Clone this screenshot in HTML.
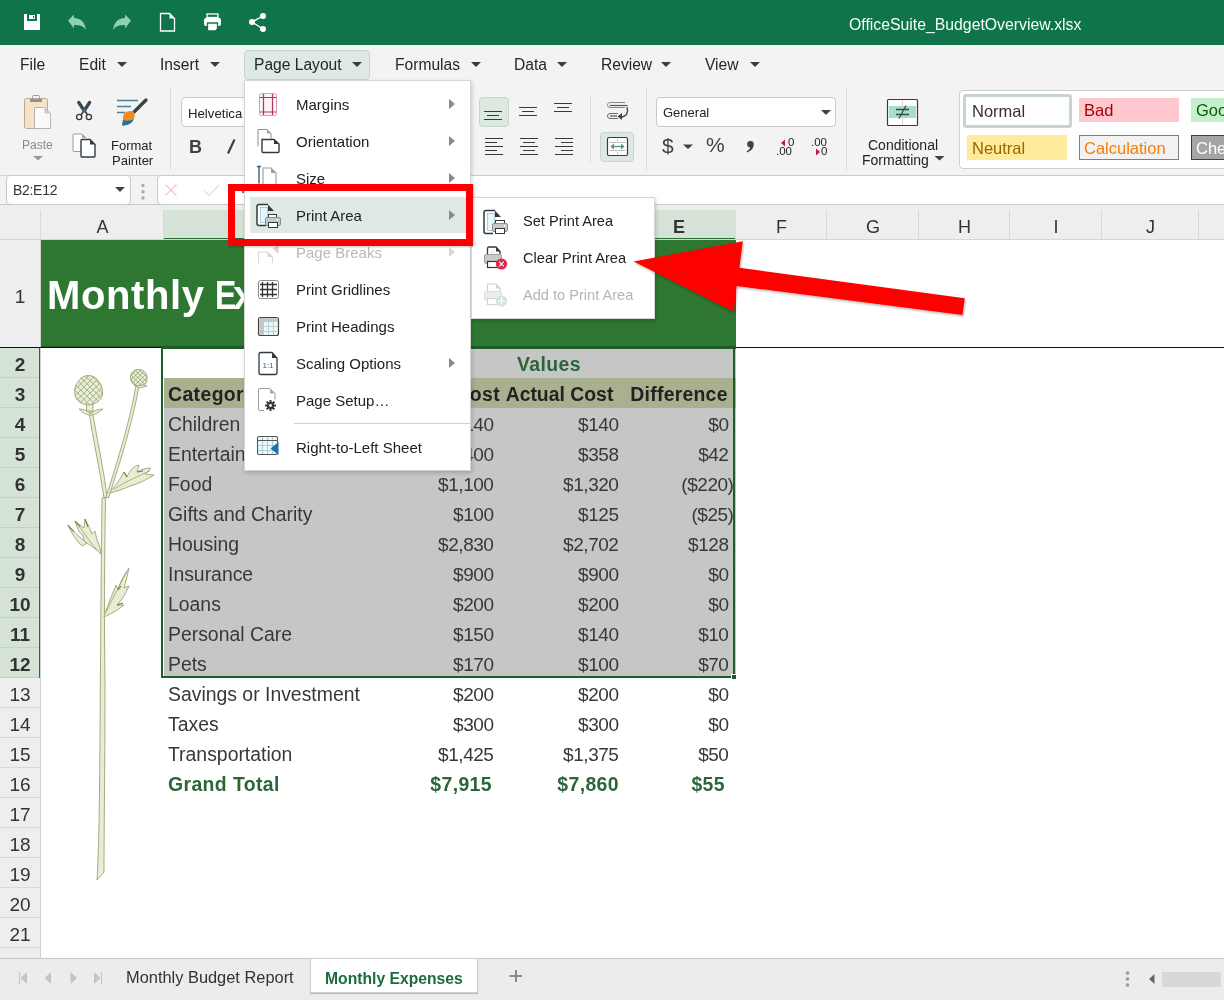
<!DOCTYPE html>
<html><head><meta charset="utf-8"><style>
*{margin:0;padding:0;box-sizing:border-box}
html,body{width:1224px;height:1000px;overflow:hidden;background:#fff;font-family:"Liberation Sans",sans-serif;color:#222}
.a{position:absolute}
.t{position:absolute;white-space:nowrap;line-height:1}
svg{position:absolute;overflow:visible}
.mi{font-size:15.6px;color:#262626}
.dd{position:absolute;width:0;height:0;border-left:5px solid transparent;border-right:5px solid transparent;border-top:5px solid #3c3c3c}
.ch{font-size:18px;color:#333;text-align:center}
.rh{font-size:19px;color:#333;text-align:center}
.c{font-size:19.4px;color:#383838}
.r{text-align:right}
.bd{font-weight:bold}
.c.bd{letter-spacing:0.4px}
.mt{font-size:15px;color:#222}
</style></head><body>
<div id="root" style="position:absolute;left:0;top:0;width:1224px;height:1000px;overflow:hidden;will-change:transform">
<div class="a" style="left:0px;top:0px;width:1224px;height:45px;background:#0f7449"></div>
<div class="a" style="left:0px;top:45px;width:1224px;height:1px;background:#eef8f3"></div>
<div class="t " style="left:849px;top:17px;font-size:15.8px;color:#f4fff9">OfficeSuite_BudgetOverview.xlsx</div>
<div class="a" style="left:0px;top:46px;width:1224px;height:39px;background:#f3f3f3"></div>
<div class="a" style="left:244px;top:50px;width:126px;height:30px;background:#dde9e2;border:1px solid #c6d5cb;border-radius:4px"></div>
<div class="t mi" style="left:20px;top:57px;">File</div>
<div class="t mi" style="left:79px;top:57px;">Edit</div>
<div class="dd" style="left:117px;top:62px"></div>
<div class="t mi" style="left:160px;top:57px;">Insert</div>
<div class="dd" style="left:210px;top:62px"></div>
<div class="t mi" style="left:254px;top:57px;">Page Layout</div>
<div class="dd" style="left:352px;top:62px"></div>
<div class="t mi" style="left:395px;top:57px;">Formulas</div>
<div class="dd" style="left:471px;top:62px"></div>
<div class="t mi" style="left:514px;top:57px;">Data</div>
<div class="dd" style="left:557px;top:62px"></div>
<div class="t mi" style="left:601px;top:57px;">Review</div>
<div class="dd" style="left:661px;top:62px"></div>
<div class="t mi" style="left:705px;top:57px;">View</div>
<div class="dd" style="left:750px;top:62px"></div>
<div class="a" style="left:0px;top:85px;width:1224px;height:90px;background:#f3f3f3"></div>
<div class="a" style="left:0px;top:175px;width:1224px;height:1px;background:#d6d6d6"></div>
<div class="a" style="left:479px;top:97px;width:30px;height:30px;background:#dce9e1;border:1px solid #c8d6cd;border-radius:4px"></div>
<div class="a" style="left:600px;top:132px;width:34px;height:30px;background:#dce9e1;border:1px solid #c8d6cd;border-radius:4px"></div>

<svg style="left:0;top:0" width="1224" height="180">
 <!-- paste -->
 <rect x="24.5" y="98.5" width="23" height="30" rx="2" fill="#f8e2c6" stroke="#b9aa98" stroke-width="1"/>
 <rect x="30" y="99" width="12" height="3" fill="#8f8f8f"/>
 <rect x="32.5" y="95.5" width="7" height="4" rx="1" fill="none" stroke="#9a9a9a" stroke-width="1"/>
 <path d="M34.5 128.5v-21h10l6 6v15z" fill="#fafafa" stroke="#b5b5b5" stroke-width="1"/>
 <path d="M44.5 107.5l6 6h-6z" fill="#c8c8c8"/>
 <path d="M33 156h10l-5 4.5z" fill="#9a9a9a"/>
 <!-- scissors -->
 <path d="M78.8 102.5L83.6 109.8M89.6 102.5L84.8 109.8" stroke="#37474f" stroke-width="3.3" stroke-linecap="round"/>
 <rect x="82.3" y="109" width="4" height="3.6" fill="#4f6670"/>
 <path d="M83 112l-1.8 2.6M85.6 112l1.8 2.6" stroke="#2f3a40" stroke-width="1.6"/>
 <circle cx="79.2" cy="117" r="2.6" fill="none" stroke="#2f3a40" stroke-width="1.3"/>
 <circle cx="88.9" cy="117" r="2.6" fill="none" stroke="#2f3a40" stroke-width="1.3"/>
 <!-- copy -->
 <path d="M81 151.5h-7a1 1 0 0 1-1-1v-15.5a1 1 0 0 1 1-1h8l4 4" fill="#fff" stroke="#9a9a9a" stroke-width="1"/>
 <path d="M82 134l4 4h-4z" fill="#a5a5a5"/>
 <path d="M90 139.5h-8a1 1 0 0 0-1 1v15.5a1 1 0 0 0 1 1h12a1 1 0 0 0 1-1v-11.5z" fill="#fff" stroke="#2f3a40" stroke-width="1.4"/>
 <path d="M90 139.5l5 5h-5z" fill="#2f3a40"/>
 <!-- format painter -->
 <path d="M117 100.5h21M117 106.5h14M117 112.5h8" stroke="#4c8198" stroke-width="1.3"/>
 <path d="M146 100l-12 12" stroke="#3a4349" stroke-width="3.4" stroke-linecap="round"/>
 <path d="M133.5 111.5c-5-2-11 1-10.5 7l-1 7c4 0 9-1 11-5 2-3 2.5-6 0.5-9z" fill="#f28a22"/>
 <path d="M122 125.5c4 0 9-1 11-5l0.8-1.2c-3 1.5-8 2-10.6 0.7z" fill="#1a72b6"/>
 <!-- font group -->
 <path d="M234.5 139.5l-6.5 14" stroke="#3a4349" stroke-width="2.2"/>
 <!-- alignment -->
 <path d="M484 111.5h18M487 115.5h12M484 119.5h18" stroke="#3a3a3a" stroke-width="1.1"/>
 <path d="M519 107.5h18M522 111.5h12M519 115.5h18" stroke="#3a3a3a" stroke-width="1.1"/>
 <path d="M554 103.5h18M557 107.5h12M554 111.5h18" stroke="#3a3a3a" stroke-width="1.1"/>
 <path d="M485 138.5h18M485 142.5h12M485 146.5h18M485 150.5h12M485 154.5h18" stroke="#3a3a3a" stroke-width="1.1"/>
 <path d="M520 138.5h18M523 142.5h12M520 146.5h18M523 150.5h12M520 154.5h18" stroke="#3a3a3a" stroke-width="1.1"/>
 <path d="M555 138.5h18M561 142.5h12M555 146.5h18M561 150.5h12M555 154.5h18" stroke="#3a3a3a" stroke-width="1.1"/>
 <!-- wrap -->
 <path d="M625 102.5h-15a2.5 2.5 0 0 0 0 5h15" fill="none" stroke="#8a8a8a" stroke-width="1"/>
 <path d="M610 105.5h17.5" stroke="#2f5f75" stroke-width="1.2"/>
 <path d="M618 113.5h-8a2.5 2.5 0 0 0 0 5h8" fill="none" stroke="#6a6a6a" stroke-width="1"/>
 <path d="M610 116h7" stroke="#3a4349" stroke-width="1.1"/>
 <path d="M627 107c1.5 5 0 10-6.5 10" fill="none" stroke="#3a4349" stroke-width="1.3"/>
 <path d="M617.5 116.5l4.5-3.5v7z" fill="#3a4349"/>
 <!-- merge -->
 <rect x="607.5" y="137.5" width="20" height="18" rx="1.5" fill="#fff" stroke="#3a3a3a" stroke-width="1.2"/>
 <path d="M609.5 142.5h16M609.5 150.5h16M617.5 139v2.5M617.5 152v2.5" stroke="#b0b0b0" stroke-width="0.8"/>
 <path d="M611 146.5h13" stroke="#4a9a78" stroke-width="1.3"/>
 <path d="M610.5 146.5l3.5-3v6zM624.5 146.5l-3.5-3v6z" fill="#4a9a78"/>
 <!-- number -->
 <path d="M822 110h9l-4.5 4.5z" fill="#3a4349"/>
 <path d="M683 144.5h10l-5 4.5z" fill="#3a4349"/>
 <path d="M785 139.5v7l-4-3.5z" fill="#c4183c"/>
 <path d="M816 148.5v7l4-3.5z" fill="#c4183c"/>
 <!-- conditional formatting -->
 <rect x="887.5" y="99.5" width="30" height="26" rx="1" fill="#fff" stroke="#3a3a3a" stroke-width="1.2"/>
 <rect x="889" y="106" width="27" height="12" fill="#a8dccf"/>
 <path d="M902.5 100v25" stroke="#d8c8cc" stroke-width="0.8"/>
 <path d="M896 109.5h13M896 114.5h13M906 105.5l-7 13" stroke="#2f4f4a" stroke-width="1.3"/>
 <path d="M934.5 156h10l-5 4.5z" fill="#3a4349"/>
</svg>

<div class="a" style="left:170px;top:88px;width:1px;height:82px;background:#dcdcdc"></div>
<div class="a" style="left:590px;top:96px;width:1px;height:66px;background:#dcdcdc"></div>
<div class="a" style="left:646px;top:88px;width:1px;height:82px;background:#dcdcdc"></div>
<div class="a" style="left:846px;top:88px;width:1px;height:82px;background:#dcdcdc"></div>
<div class="t " style="left:22px;top:139px;font-size:12px;color:#8a8a8a">Paste</div>
<div class="t " style="left:111px;top:139px;font-size:13px;color:#222">Format</div>
<div class="t " style="left:112px;top:154px;font-size:13px;color:#222">Painter</div>
<div class="a" style="left:181px;top:97px;width:70px;height:30px;background:#fff;border:1px solid #c9c9c9;border-radius:4px"></div>
<div class="t " style="left:188px;top:107px;font-size:13.2px;color:#222">Helvetica</div>
<div class="a" style="left:656px;top:97px;width:180px;height:30px;background:#fff;border:1px solid #c9c9c9;border-radius:4px"></div>
<div class="t " style="left:663px;top:106px;font-size:13px;color:#222">General</div>
<div class="dd" style="left:821px;top:110px;border-top-color:#3a4349"></div>
<div class="t bd" style="left:189px;top:138px;font-size:18px;color:#3a4349">B</div>
<div class="t " style="left:662px;top:135px;font-size:21px;color:#3a4349">$</div>
<div class="t " style="left:706px;top:134px;font-size:21px;color:#3a4349">%</div>
<svg style="left:0;top:0" width="1224" height="180"><path d="M750.5 141a3.2 3.2 0 0 1 3.2 3.4c0 3.5-2.5 6.5-6.5 8l-0.6-1.2c2-1 3.3-2.3 3.6-3.8a3.2 3.2 0 0 1 0.3-6.4z" fill="#3a4349"/></svg>
<div class="t " style="left:788px;top:137px;font-size:11.5px;color:#222">0</div>
<div class="t " style="left:776px;top:146px;font-size:11.5px;color:#222">.00</div>
<div class="t " style="left:811px;top:137px;font-size:11.5px;color:#222">.00</div>
<div class="t " style="left:821px;top:146px;font-size:11.5px;color:#222">0</div>
<div class="t " style="left:868px;top:138px;font-size:14px;color:#222">Conditional</div>
<div class="t " style="left:862px;top:153px;font-size:14px;color:#222">Formatting</div>
<div class="a" style="left:959px;top:90px;width:280px;height:79px;background:#fff;border:1px solid #cfcfcf;border-radius:4px"></div>
<div class="a" style="left:963px;top:94px;width:109px;height:34px;background:#fff;border:3px solid #c6d6ce;border-radius:3px"></div>
<div class="t " style="left:972px;top:103px;font-size:16.5px;color:#333">Normal</div>
<div class="a" style="left:967px;top:135px;width:100px;height:25px;background:#ffeb9c"></div>
<div class="t " style="left:972px;top:140px;font-size:16.5px;color:#9c6500">Neutral</div>
<div class="a" style="left:1079px;top:98px;width:100px;height:24px;background:#ffc7ce"></div>
<div class="t " style="left:1084px;top:102px;font-size:16.5px;color:#9c0006">Bad</div>
<div class="a" style="left:1079px;top:135px;width:100px;height:25px;background:#f2f2f2;border:1px solid #7f7f7f"></div>
<div class="t " style="left:1084px;top:140px;font-size:16.5px;color:#fa7d00">Calculation</div>
<div class="a" style="left:1191px;top:98px;width:60px;height:24px;background:#c6efce"></div>
<div class="t " style="left:1196px;top:102px;font-size:16.5px;color:#006100">Good</div>
<div class="a" style="left:1191px;top:135px;width:60px;height:25px;background:#a5a5a5;border:1px solid #3f3f3f"></div>
<div class="t " style="left:1196px;top:140px;font-size:16.5px;color:#fff">Check Cell</div>

<svg style="left:0;top:0" width="300" height="44">
 <path d="M24 14h16v16h-16z" fill="#fff"/>
 <rect x="27" y="14" width="10" height="7" fill="#0f7449"/>
 <rect x="29" y="15" width="6" height="4" fill="#fff"/>
 <rect x="33" y="16" width="1.2" height="2" fill="#0f7449"/>
 <path d="M68 20.5l6-6v3.5c6 0 11 3.5 12 12-2.5-4-6-5-12-5v3.5z" fill="#8fd0ae"/>
 <path d="M131 20.5l-6-6v3.5c-6 0-11 3.5-12 12 2.5-4 6-5 12-5v3.5z" fill="#8fd0ae"/>
 <path d="M160.5 13.5h9l5 5v12.5h-14z" fill="none" stroke="#fff" stroke-width="1.3"/>
 <path d="M169.5 13.5l5 5h-5z" fill="#fff"/>
 <rect x="207" y="14" width="11" height="3.5" fill="none" stroke="#fff" stroke-width="1.3"/>
 <rect x="204" y="18" width="17" height="8" rx="2" fill="#fff"/>
 <path d="M207.5 23h10v6l-2 2h-8z" fill="#fff" stroke="#0f7449" stroke-width="1.3"/>
 <circle cx="263" cy="16" r="3" fill="#fff"/><circle cx="252" cy="22" r="3" fill="#fff"/><circle cx="263" cy="29" r="3" fill="#fff"/>
 <path d="M263 16l-11 6 11 7" fill="none" stroke="#fff" stroke-width="1.4"/>
</svg>

<div class="a" style="left:0px;top:176px;width:1224px;height:28px;background:#f3f3f3"></div>
<div class="a" style="left:6px;top:175px;width:125px;height:30px;background:#fff;border:1px solid #c9c9c9;border-radius:4px"></div>
<div class="t " style="left:13px;top:183px;font-size:14px;color:#333;letter-spacing:-0.3px">B2:E12</div>
<div class="dd" style="left:115px;top:187px;border-top-color:#3b4650"></div>
<div class="a" style="left:157px;top:175px;width:1090px;height:30px;background:#fff;border:1px solid #c9c9c9;border-radius:4px"></div>
<svg style="left:0;top:0" width="300" height="210">
 <circle cx="143" cy="185.5" r="1.7" fill="#ababab"/><circle cx="143" cy="191.8" r="1.7" fill="#ababab"/><circle cx="143" cy="198" r="1.7" fill="#ababab"/>
 <path d="M165.5 184.5l11 11M176.5 184.5l-11 11" stroke="#f2c4cc" stroke-width="1.2"/>
 <path d="M204.5 191l4.5 4.5 10-10.5" fill="none" stroke="#d3e6da" stroke-width="1.2"/>
 <circle cx="243" cy="192" r="1" fill="#444"/>
</svg>
<div class="a" style="left:0px;top:204px;width:1224px;height:36px;background:#eeeeee;border-top:1px solid #c8c8c8"></div>
<div class="a" style="left:0px;top:239px;width:1224px;height:1px;background:#d6d6d6"></div>
<div class="a" style="left:163px;top:210px;width:1px;height:29px;background:#d9d9d9"></div>
<div class="t ch" style="left:41px;top:217.5px;width:123px;">A</div>
<div class="a" style="left:164px;top:210px;width:208px;height:28px;background:#d5e2d6"></div>
<div class="a" style="left:164px;top:238px;width:208px;height:1px;background:#2b6a37"></div>
<div class="a" style="left:371px;top:210px;width:1px;height:29px;background:#d9d9d9"></div>
<div class="t ch" style="left:164px;top:217.5px;width:208px;font-weight:bold;">B</div>
<div class="a" style="left:372px;top:210px;width:125px;height:28px;background:#d5e2d6"></div>
<div class="a" style="left:372px;top:238px;width:125px;height:1px;background:#2b6a37"></div>
<div class="a" style="left:496px;top:210px;width:1px;height:29px;background:#d9d9d9"></div>
<div class="t ch" style="left:372px;top:217.5px;width:125px;font-weight:bold;">C</div>
<div class="a" style="left:497px;top:210px;width:125px;height:28px;background:#d5e2d6"></div>
<div class="a" style="left:497px;top:238px;width:125px;height:1px;background:#2b6a37"></div>
<div class="a" style="left:621px;top:210px;width:1px;height:29px;background:#d9d9d9"></div>
<div class="t ch" style="left:497px;top:217.5px;width:125px;font-weight:bold;">D</div>
<div class="a" style="left:622px;top:210px;width:114px;height:28px;background:#d5e2d6"></div>
<div class="a" style="left:622px;top:238px;width:114px;height:1px;background:#2b6a37"></div>
<div class="a" style="left:735px;top:210px;width:1px;height:29px;background:#d9d9d9"></div>
<div class="t ch" style="left:622px;top:217.5px;width:114px;font-weight:bold;">E</div>
<div class="a" style="left:826px;top:210px;width:1px;height:29px;background:#d9d9d9"></div>
<div class="t ch" style="left:736px;top:217.5px;width:91px;">F</div>
<div class="a" style="left:918px;top:210px;width:1px;height:29px;background:#d9d9d9"></div>
<div class="t ch" style="left:827px;top:217.5px;width:92px;">G</div>
<div class="a" style="left:1009px;top:210px;width:1px;height:29px;background:#d9d9d9"></div>
<div class="t ch" style="left:919px;top:217.5px;width:91px;">H</div>
<div class="a" style="left:1101px;top:210px;width:1px;height:29px;background:#d9d9d9"></div>
<div class="t ch" style="left:1010px;top:217.5px;width:92px;">I</div>
<div class="a" style="left:1198px;top:210px;width:1px;height:29px;background:#d9d9d9"></div>
<div class="t ch" style="left:1102px;top:217.5px;width:97px;">J</div>
<div class="a" style="left:1289px;top:210px;width:1px;height:29px;background:#d9d9d9"></div>
<div class="t ch" style="left:1199px;top:217.5px;width:91px;">K</div>
<div class="a" style="left:40px;top:210px;width:1px;height:29px;background:#d9d9d9"></div>
<div class="a" style="left:0px;top:240px;width:40px;height:107px;background:#eeeeee"></div>
<div class="t rh" style="left:0;top:287px;width:40px">1</div>
<div class="a" style="left:0px;top:348px;width:40px;height:30px;background:#d5e2d6;border-bottom:1px solid #c4d2c6"></div>
<div class="t rh" style="left:0;top:355px;width:40px;font-weight:bold;">2</div>
<div class="a" style="left:0px;top:378px;width:40px;height:30px;background:#d5e2d6;border-bottom:1px solid #c4d2c6"></div>
<div class="t rh" style="left:0;top:385px;width:40px;font-weight:bold;">3</div>
<div class="a" style="left:0px;top:408px;width:40px;height:30px;background:#d5e2d6;border-bottom:1px solid #c4d2c6"></div>
<div class="t rh" style="left:0;top:415px;width:40px;font-weight:bold;">4</div>
<div class="a" style="left:0px;top:438px;width:40px;height:30px;background:#d5e2d6;border-bottom:1px solid #c4d2c6"></div>
<div class="t rh" style="left:0;top:445px;width:40px;font-weight:bold;">5</div>
<div class="a" style="left:0px;top:468px;width:40px;height:30px;background:#d5e2d6;border-bottom:1px solid #c4d2c6"></div>
<div class="t rh" style="left:0;top:475px;width:40px;font-weight:bold;">6</div>
<div class="a" style="left:0px;top:498px;width:40px;height:30px;background:#d5e2d6;border-bottom:1px solid #c4d2c6"></div>
<div class="t rh" style="left:0;top:505px;width:40px;font-weight:bold;">7</div>
<div class="a" style="left:0px;top:528px;width:40px;height:30px;background:#d5e2d6;border-bottom:1px solid #c4d2c6"></div>
<div class="t rh" style="left:0;top:535px;width:40px;font-weight:bold;">8</div>
<div class="a" style="left:0px;top:558px;width:40px;height:30px;background:#d5e2d6;border-bottom:1px solid #c4d2c6"></div>
<div class="t rh" style="left:0;top:565px;width:40px;font-weight:bold;">9</div>
<div class="a" style="left:0px;top:588px;width:40px;height:30px;background:#d5e2d6;border-bottom:1px solid #c4d2c6"></div>
<div class="t rh" style="left:0;top:595px;width:40px;font-weight:bold;">10</div>
<div class="a" style="left:0px;top:618px;width:40px;height:30px;background:#d5e2d6;border-bottom:1px solid #c4d2c6"></div>
<div class="t rh" style="left:0;top:625px;width:40px;font-weight:bold;">11</div>
<div class="a" style="left:0px;top:648px;width:40px;height:30px;background:#d5e2d6;border-bottom:1px solid #c4d2c6"></div>
<div class="t rh" style="left:0;top:655px;width:40px;font-weight:bold;">12</div>
<div class="a" style="left:0px;top:678px;width:40px;height:30px;background:#eeeeee;border-bottom:1px solid #d8d8d8"></div>
<div class="t rh" style="left:0;top:685px;width:40px;">13</div>
<div class="a" style="left:0px;top:708px;width:40px;height:30px;background:#eeeeee;border-bottom:1px solid #d8d8d8"></div>
<div class="t rh" style="left:0;top:715px;width:40px;">14</div>
<div class="a" style="left:0px;top:738px;width:40px;height:30px;background:#eeeeee;border-bottom:1px solid #d8d8d8"></div>
<div class="t rh" style="left:0;top:745px;width:40px;">15</div>
<div class="a" style="left:0px;top:768px;width:40px;height:30px;background:#eeeeee;border-bottom:1px solid #d8d8d8"></div>
<div class="t rh" style="left:0;top:775px;width:40px;">16</div>
<div class="a" style="left:0px;top:798px;width:40px;height:30px;background:#eeeeee;border-bottom:1px solid #d8d8d8"></div>
<div class="t rh" style="left:0;top:805px;width:40px;">17</div>
<div class="a" style="left:0px;top:828px;width:40px;height:30px;background:#eeeeee;border-bottom:1px solid #d8d8d8"></div>
<div class="t rh" style="left:0;top:835px;width:40px;">18</div>
<div class="a" style="left:0px;top:858px;width:40px;height:30px;background:#eeeeee;border-bottom:1px solid #d8d8d8"></div>
<div class="t rh" style="left:0;top:865px;width:40px;">19</div>
<div class="a" style="left:0px;top:888px;width:40px;height:30px;background:#eeeeee;border-bottom:1px solid #d8d8d8"></div>
<div class="t rh" style="left:0;top:895px;width:40px;">20</div>
<div class="a" style="left:0px;top:918px;width:40px;height:30px;background:#eeeeee;border-bottom:1px solid #d8d8d8"></div>
<div class="t rh" style="left:0;top:925px;width:40px;">21</div>
<div class="a" style="left:0px;top:948px;width:40px;height:30px;background:#eeeeee;border-bottom:1px solid #d8d8d8"></div>
<div class="t rh" style="left:0;top:955px;width:40px;">22</div>
<div class="a" style="left:39px;top:348px;width:2px;height:330px;background:#2b6a37"></div>
<div class="a" style="left:40px;top:240px;width:1px;height:718px;background:#d0d0d0"></div>
<div class="a" style="left:41px;top:240px;width:695px;height:107px;background:#2e7731"></div>
<div class="t bd" style="left:47px;top:275px;font-size:40px;color:#fff;letter-spacing:0.6px">Monthly</div>
<div class="t bd" style="left:215px;top:275px;font-size:40px;color:#fff;transform:scaleX(0.8);transform-origin:0 0">E</div>
<div class="t bd" style="left:233px;top:275px;font-size:40px;color:#fff">x</div>
<div class="a" style="left:0px;top:347px;width:1224px;height:1px;background:#111"></div>
<div class="a" style="left:41px;top:346px;width:695px;height:1px;background:#1f5a26"></div>

<svg style="left:0;top:0" width="200" height="1000">
 <g fill="#e8eed3" stroke="#98a477" stroke-width="0.9" stroke-linejoin="round">
  <path d="M105.5 497 C104.5 560 104 620 105 680 C105 760 104 830 104 872 L97 880 C99 850 99.5 800 100 740 C100.5 660 101 580 102 498 Z"/>
  <path d="M89 412 C93 440 100 470 104 498 L107 497 C104 470 97 440 92.5 412 Z"/>
  <path d="M136 386 C130 420 118 460 106 497 L108.5 498 C121 460 133 420 139 386 Z"/>
  <path d="M86.5 403 L86.5 411 L93 411 L93 403 Z"/>
  <path d="M79 409 C84 409 88 411 90.5 414 C93 411 98 409 103 409 C99 412 95 415 90.5 415 C86 415 82 412 79 409 Z"/>
  <path d="M134 385 L140 383 L147 386 L139 388 Z"/>
  <path d="M88.5 375.5 C84 375.5 80 378 78 382 C75 385 74 390 75 395 C76 400 80 404 88.5 405 C97 404 101 400 102.5 395 C103 390 102 385 99 382 C97 378 93 375.5 88.5 375.5 Z"/>
  <path d="M138.7 369.5 C135 369.5 132 371.5 131 374.5 C130 378 130.5 382 133 384 C135 385.5 137 385.5 138.7 385.5 C141 385.5 144 385 146 383 C147.5 380 147.5 376 146 373.5 C144 370.5 141.5 369.5 138.7 369.5 Z"/>
  <path d="M110 492 C116 485 120 480 124 472 L127 477 C130 470 134 466 139 465 L137 472 C142 469 147 468 151 468 L145 474 C148 474 151 475 154 475 C146 480 138 484 130 486 C124 489 117 491 110 493 Z"/>
  <path d="M101 554 C95 548 88 544 84 541 L83 535 C80 534 78 530 75 521 C79 524 81 526 84 528 L85 519 C88 525 91 530 92 534 L95 531 C96 537 98 543 100 548 Z"/>
  <path d="M68 525 C74 532 80 538 87 543 L82 546 C76 540 71 533 68 525 Z"/>
  <path d="M104 616 C108 605 112 595 116 585 L118 590 C120 582 124 575 129 568 C127 576 126 582 124 588 L129 586 C126 593 122 600 117 605 L124 605 C118 610 111 614 104 617 Z"/>
 </g>
 <g fill="none" stroke="#8f9c6c" stroke-width="0.75">
  <clipPath id="cbL"><path d="M88.5 375.5 C84 375.5 80 378 78 382 C75 385 74 390 75 395 C76 400 80 404 88.5 405 C97 404 101 400 102.5 395 C103 390 102 385 99 382 C97 378 93 375.5 88.5 375.5 Z"/></clipPath>
  <clipPath id="cbR"><path d="M138.7 369.5 C135 369.5 132 371.5 131 374.5 C130 378 130.5 382 133 384 C135 385.5 137 385.5 138.7 385.5 C141 385.5 144 385 146 383 C147.5 380 147.5 376 146 373.5 C144 370.5 141.5 369.5 138.7 369.5 Z"/></clipPath>
  <path clip-path="url(#cbL)" d="M40.0 406.0L72.0 374.0M40.0 374.0L72.0 406.0M46.2 406.0L78.2 374.0M46.2 374.0L78.2 406.0M52.4 406.0L84.4 374.0M52.4 374.0L84.4 406.0M58.6 406.0L90.6 374.0M58.6 374.0L90.6 406.0M64.8 406.0L96.8 374.0M64.8 374.0L96.8 406.0M71.0 406.0L103.0 374.0M71.0 374.0L103.0 406.0M77.2 406.0L109.2 374.0M77.2 374.0L109.2 406.0M83.4 406.0L115.4 374.0M83.4 374.0L115.4 406.0M89.6 406.0L121.6 374.0M89.6 374.0L121.6 406.0M95.8 406.0L127.8 374.0M95.8 374.0L127.8 406.0M102.0 406.0L134.0 374.0M102.0 374.0L134.0 406.0M108.2 406.0L140.2 374.0M108.2 374.0L140.2 406.0M114.4 406.0L146.4 374.0M114.4 374.0L146.4 406.0M120.6 406.0L152.6 374.0M120.6 374.0L152.6 406.0M126.8 406.0L158.8 374.0M126.8 374.0L158.8 406.0M133.0 406.0L165.0 374.0M133.0 374.0L165.0 406.0"/>
  <path clip-path="url(#cbR)" d="M110.0 387.0L129.0 368.0M110.0 368.0L129.0 387.0M114.6 387.0L133.6 368.0M114.6 368.0L133.6 387.0M119.2 387.0L138.2 368.0M119.2 368.0L138.2 387.0M123.8 387.0L142.8 368.0M123.8 368.0L142.8 387.0M128.4 387.0L147.4 368.0M128.4 368.0L147.4 387.0M133.0 387.0L152.0 368.0M133.0 368.0L152.0 387.0M137.6 387.0L156.6 368.0M137.6 368.0L156.6 387.0M142.2 387.0L161.2 368.0M142.2 368.0L161.2 387.0M146.8 387.0L165.8 368.0M146.8 368.0L165.8 387.0M151.4 387.0L170.4 368.0M151.4 368.0L170.4 387.0M156.0 387.0L175.0 368.0M156.0 368.0L175.0 387.0M160.6 387.0L179.6 368.0M160.6 368.0L179.6 387.0M165.2 387.0L184.2 368.0M165.2 368.0L184.2 387.0"/>
  <path d="M114 489 C125 482 138 476 150 471M106 612 C112 600 118 588 127 571M97 550 C90 542 84 533 77 523"/>
 </g>
 <g fill="none" stroke="#6f7f48" stroke-width="1.1">
  <path d="M137 472 L143 471M124 472 L127 477M85 519 L88 527M75 521 L80 527M118 590 L121 586M117 605 L123 603M68 525 L74 532"/>
 </g>
</svg>

<div class="a" style="left:372px;top:348px;width:364px;height:30px;background:#c6c6c6"></div>
<div class="a" style="left:164px;top:378px;width:572px;height:30px;background:#a9b08f"></div>
<div class="a" style="left:164px;top:408px;width:572px;height:270px;background:#c6c6c6"></div>
<div class="t c bd" style="left:517px;top:355px;color:#2b6538">Values</div>
<div class="t c bd" style="left:168px;top:385px;color:#222">Category</div>
<div class="t c bd" style="right:724px;top:385px;color:#222">Projected Cost</div>
<div class="t c bd" style="left:497px;width:125px;text-align:center;top:385px;color:#222;letter-spacing:0px">Actual Cost</div>
<div class="t c bd" style="left:622px;width:114px;text-align:center;top:385px;color:#222;letter-spacing:0.25px">Difference</div>
<div class="t c" style="left:168px;top:415px;">Children</div>
<div class="t c" style="right:730.5px;top:415px;font-size:19px;letter-spacing:-0.45px">$140</div>
<div class="t c" style="right:605.5px;top:415px;font-size:19px;letter-spacing:-0.45px">$140</div>
<div class="t c" style="right:495.5px;top:415px;font-size:19px;letter-spacing:-0.45px">$0</div>
<div class="t c" style="left:168px;top:445px;">Entertainment</div>
<div class="t c" style="right:730.5px;top:445px;font-size:19px;letter-spacing:-0.45px">$400</div>
<div class="t c" style="right:605.5px;top:445px;font-size:19px;letter-spacing:-0.45px">$358</div>
<div class="t c" style="right:495.5px;top:445px;font-size:19px;letter-spacing:-0.45px">$42</div>
<div class="t c" style="left:168px;top:475px;">Food</div>
<div class="t c" style="right:730.5px;top:475px;font-size:19px;letter-spacing:-0.45px">$1,100</div>
<div class="t c" style="right:605.5px;top:475px;font-size:19px;letter-spacing:-0.45px">$1,320</div>
<div class="t c" style="right:490.5px;top:475px;font-size:19px;letter-spacing:-0.45px">($220)</div>
<div class="t c" style="left:168px;top:505px;">Gifts and Charity</div>
<div class="t c" style="right:730.5px;top:505px;font-size:19px;letter-spacing:-0.45px">$100</div>
<div class="t c" style="right:605.5px;top:505px;font-size:19px;letter-spacing:-0.45px">$125</div>
<div class="t c" style="right:490.5px;top:505px;font-size:19px;letter-spacing:-0.45px">($25)</div>
<div class="t c" style="left:168px;top:535px;">Housing</div>
<div class="t c" style="right:730.5px;top:535px;font-size:19px;letter-spacing:-0.45px">$2,830</div>
<div class="t c" style="right:605.5px;top:535px;font-size:19px;letter-spacing:-0.45px">$2,702</div>
<div class="t c" style="right:495.5px;top:535px;font-size:19px;letter-spacing:-0.45px">$128</div>
<div class="t c" style="left:168px;top:565px;">Insurance</div>
<div class="t c" style="right:730.5px;top:565px;font-size:19px;letter-spacing:-0.45px">$900</div>
<div class="t c" style="right:605.5px;top:565px;font-size:19px;letter-spacing:-0.45px">$900</div>
<div class="t c" style="right:495.5px;top:565px;font-size:19px;letter-spacing:-0.45px">$0</div>
<div class="t c" style="left:168px;top:595px;">Loans</div>
<div class="t c" style="right:730.5px;top:595px;font-size:19px;letter-spacing:-0.45px">$200</div>
<div class="t c" style="right:605.5px;top:595px;font-size:19px;letter-spacing:-0.45px">$200</div>
<div class="t c" style="right:495.5px;top:595px;font-size:19px;letter-spacing:-0.45px">$0</div>
<div class="t c" style="left:168px;top:625px;">Personal Care</div>
<div class="t c" style="right:730.5px;top:625px;font-size:19px;letter-spacing:-0.45px">$150</div>
<div class="t c" style="right:605.5px;top:625px;font-size:19px;letter-spacing:-0.45px">$140</div>
<div class="t c" style="right:495.5px;top:625px;font-size:19px;letter-spacing:-0.45px">$10</div>
<div class="t c" style="left:168px;top:655px;">Pets</div>
<div class="t c" style="right:730.5px;top:655px;font-size:19px;letter-spacing:-0.45px">$170</div>
<div class="t c" style="right:605.5px;top:655px;font-size:19px;letter-spacing:-0.45px">$100</div>
<div class="t c" style="right:495.5px;top:655px;font-size:19px;letter-spacing:-0.45px">$70</div>
<div class="t c" style="left:168px;top:685px;">Savings or Investment</div>
<div class="t c" style="right:730.5px;top:685px;font-size:19px;letter-spacing:-0.45px">$200</div>
<div class="t c" style="right:605.5px;top:685px;font-size:19px;letter-spacing:-0.45px">$200</div>
<div class="t c" style="right:495.5px;top:685px;font-size:19px;letter-spacing:-0.45px">$0</div>
<div class="t c" style="left:168px;top:715px;">Taxes</div>
<div class="t c" style="right:730.5px;top:715px;font-size:19px;letter-spacing:-0.45px">$300</div>
<div class="t c" style="right:605.5px;top:715px;font-size:19px;letter-spacing:-0.45px">$300</div>
<div class="t c" style="right:495.5px;top:715px;font-size:19px;letter-spacing:-0.45px">$0</div>
<div class="t c" style="left:168px;top:745px;">Transportation</div>
<div class="t c" style="right:730.5px;top:745px;font-size:19px;letter-spacing:-0.45px">$1,425</div>
<div class="t c" style="right:605.5px;top:745px;font-size:19px;letter-spacing:-0.45px">$1,375</div>
<div class="t c" style="right:495.5px;top:745px;font-size:19px;letter-spacing:-0.45px">$50</div>
<div class="t c bd" style="left:168px;top:775px;color:#2b6538">Grand Total</div>
<div class="t c bd" style="right:732px;top:775px;color:#2b6538">$7,915</div>
<div class="t c bd" style="right:605px;top:775px;color:#2b6538">$7,860</div>
<div class="t c bd" style="right:499px;top:775px;color:#2b6538">$55</div>
<div class="a" style="left:161px;top:347px;width:575px;height:2px;background:#1e5c2a"></div>
<div class="a" style="left:161px;top:347px;width:2px;height:331px;background:#1e5c2a"></div>
<div class="a" style="left:733px;top:347px;width:2px;height:331px;background:#1e5c2a"></div>
<div class="a" style="left:161px;top:676px;width:574px;height:2px;background:#1e5c2a"></div>
<div class="a" style="left:731px;top:674px;width:6px;height:6px;background:#1e5c2a;border:1px solid #fff"></div>
<div class="a" style="left:244px;top:80px;width:227px;height:391px;background:#fff;border:1px solid #d6d6d6;box-shadow:1px 2px 4px rgba(0,0,0,.18)"></div>
<div class="a" style="left:250px;top:197px;width:216px;height:36px;background:#dfe9e3"></div>
<div class="t mt" style="left:296px;top:97px;color:#222">Margins</div>
<div class="a" style="left:449px;top:99px;width:0;height:0;border-top:5px solid transparent;border-bottom:5px solid transparent;border-left:6px solid #8a8a8a"></div>
<div class="t mt" style="left:296px;top:134px;color:#222">Orientation</div>
<div class="a" style="left:449px;top:136px;width:0;height:0;border-top:5px solid transparent;border-bottom:5px solid transparent;border-left:6px solid #8a8a8a"></div>
<div class="t mt" style="left:296px;top:171px;color:#222">Size</div>
<div class="a" style="left:449px;top:173px;width:0;height:0;border-top:5px solid transparent;border-bottom:5px solid transparent;border-left:6px solid #8a8a8a"></div>
<div class="t mt" style="left:296px;top:208px;color:#222">Print Area</div>
<div class="a" style="left:449px;top:210px;width:0;height:0;border-top:5px solid transparent;border-bottom:5px solid transparent;border-left:6px solid #8a8a8a"></div>
<div class="t mt" style="left:296px;top:245px;color:#b9b9b9">Page Breaks</div>
<div class="a" style="left:449px;top:247px;width:0;height:0;border-top:5px solid transparent;border-bottom:5px solid transparent;border-left:6px solid #d8d8d8"></div>
<div class="t mt" style="left:296px;top:282px;color:#222">Print Gridlines</div>
<div class="t mt" style="left:296px;top:319px;color:#222">Print Headings</div>
<div class="t mt" style="left:296px;top:356px;color:#222">Scaling Options</div>
<div class="a" style="left:449px;top:358px;width:0;height:0;border-top:5px solid transparent;border-bottom:5px solid transparent;border-left:6px solid #8a8a8a"></div>
<div class="t mt" style="left:296px;top:393px;color:#222">Page Setup…</div>
<div class="t mt" style="left:296px;top:440px;color:#222">Right-to-Left Sheet</div>
<div class="a" style="left:294px;top:423px;width:177px;height:1px;background:#d0d0d0"></div>

<svg style="left:0;top:0" width="1224" height="1000">
 <!-- margins -->
 <rect x="259.5" y="93.5" width="17" height="22" rx="2" fill="#fdf2f5" stroke="#d7a3b3" stroke-width="1"/>
 <path d="M263.5 94v21M272.5 94v21M260 97.5h16M260 112h16" stroke="#a93a5c" stroke-width="1.2"/>
 <!-- orientation -->
 <path d="M258 146.5v-17h9l4 4v5" fill="none" stroke="#8d8d8d" stroke-width="1"/>
 <path d="M267 129.5l4 4h-4z" fill="#9a9a9a"/>
 <path d="M262 139.5h12l5 4.5v7.5a1 1 0 0 1-1 1h-15a1 1 0 0 1-1-1z" fill="#fff" stroke="#2f3a40" stroke-width="1.4"/>
 <path d="M274 139.5l5 4.5h-5z" fill="#2f3a40"/>
 <!-- size -->
 <path d="M257 166.5h4M259 166.5v17" stroke="#3d5f75" stroke-width="1.4"/>
 <path d="M263 184v-16h8l5 5v11" fill="none" stroke="#9a9a9a" stroke-width="1.1"/>
 <path d="M271 168l5 5h-5z" fill="#a0a0a0"/>
 <!-- print area -->
 <path d="M268 204.5h-9a2 2 0 0 0-2 2v17a2 2 0 0 0 2 2h7" fill="#fff" stroke="#2f3a40" stroke-width="1.5"/>
 <rect x="260.5" y="207.5" width="7" height="15" fill="#eaf6fb" stroke="#9cc3d3" stroke-width="0.8"/>
 <path d="M268 204.5l6 6.5h-6z" fill="#2f3a40"/>
 <rect x="268.5" y="214.5" width="8" height="4" fill="#fff" stroke="#2f3a40" stroke-width="1"/>
 <rect x="265.5" y="217.5" width="15" height="8" rx="1.5" fill="#c9c9c9" stroke="#8c8c8c" stroke-width="1"/>
 <circle cx="277.5" cy="219.8" r="0.9" fill="#fff"/>
 <rect x="268.5" y="222.5" width="9" height="5" fill="#fff" stroke="#2f3a40" stroke-width="1"/>
 <!-- page breaks (disabled) -->
 <path d="M258.5 263v-11h9l5 5v6" fill="none" stroke="#dadada" stroke-width="1.1"/>
 <path d="M267.5 252l5 5h-5z" fill="#d6d6d6"/>
 <path d="M272.5 248l6-2v8z" fill="#f0c4cc"/>
 <!-- print gridlines -->
 <rect x="258.5" y="280.5" width="20" height="18" rx="2" fill="#fff" stroke="#8a8a8a" stroke-width="1"/>
 <path d="M262.5 282v15M267.5 282v15M272.5 282v15M260 284.5h17M260 289.5h17M260 294.5h17" stroke="#333" stroke-width="1.3"/>
 <!-- print headings -->
 <rect x="258.5" y="317.5" width="20" height="18" rx="2" fill="#eaf8f8" stroke="#444" stroke-width="1.2"/>
 <rect x="259.2" y="318.2" width="4" height="16.6" fill="#c6c6c6"/>
 <rect x="259.2" y="318.2" width="18.6" height="3" fill="#c6c6c6"/>
 <path d="M263.5 318v17M268.5 318v17M273.5 318v17M259 321.5h19M259 326.5h19M259 331.5h19" stroke="#a9c9c9" stroke-width="0.8"/>
 <!-- scaling -->
 <path d="M272 352.5h-11a2 2 0 0 0-2 2v18a2 2 0 0 0 2 2h14a2 2 0 0 0 2-2v-14.5z" fill="#fff" stroke="#2f3a40" stroke-width="1.3"/>
 <path d="M272 352.5l5 5.5h-5z" fill="#2f3a40"/>
 <text x="268" y="368" font-family="Liberation Sans" font-size="8" fill="#3f6482" text-anchor="middle">1:1</text>
 <!-- page setup -->
 <path d="M264 410.5h-4a1.5 1.5 0 0 1-1.5-1.5v-19a1.5 1.5 0 0 1 1.5-1.5h10l5 5v6" fill="none" stroke="#9a9a9a" stroke-width="1"/>
 <path d="M270 388.5l5 5h-5z" fill="#a8a8a8"/>
 <g transform="translate(270.5 405.5)"><circle r="3.6" fill="#383838"/><path d="M0-5.5v11M-5.5 0h11M-3.9-3.9l7.8 7.8M3.9-3.9l-7.8 7.8" stroke="#383838" stroke-width="2"/><circle r="1.4" fill="#fff"/></g>
 <!-- rtl -->
 <rect x="257.5" y="436.5" width="20" height="18" rx="1.5" fill="#eaf8fa" stroke="#555" stroke-width="1.1"/>
 <path d="M257.5 440.5h20M262.5 437v17M267.5 437v17M272.5 437v17M258 445.5h19M258 450.5h19" stroke="#9ec3c6" stroke-width="0.8"/>
 <path d="M257.5 440.5h20" stroke="#555" stroke-width="1"/>
 <path d="M278.5 442v13l-8-6.5z" fill="#1d6fb8"/>
</svg>

<div class="a" style="left:471px;top:197px;width:184px;height:122px;background:#fff;border:1px solid #d6d6d6;box-shadow:1px 2px 4px rgba(0,0,0,.18)"></div>
<div class="t mt" style="left:523px;top:214px;color:#222;font-size:14.6px">Set Print Area</div>
<div class="t mt" style="left:523px;top:251px;color:#222;font-size:14.6px">Clear Print Area</div>
<div class="t mt" style="left:523px;top:288px;color:#b5b5b5;font-size:14.6px">Add to Print Area</div>

<svg style="left:0;top:0" width="1224" height="1000">
 <!-- set print area -->
 <path d="M495 210.5h-9a2 2 0 0 0-2 2v19a2 2 0 0 0 2 2h7" fill="#fff" stroke="#2f3a40" stroke-width="1.5"/>
 <rect x="487.5" y="213.5" width="7" height="17" fill="#eaf6fb" stroke="#9cc3d3" stroke-width="0.8"/>
 <path d="M495 210.5l6 6.5h-6z" fill="#2f3a40"/>
 <rect x="495.5" y="220.5" width="9" height="4" fill="#fff" stroke="#2f3a40" stroke-width="1"/>
 <rect x="492.5" y="223.5" width="15" height="8" rx="1.5" fill="#c9c9c9" stroke="#8c8c8c" stroke-width="1"/>
 <circle cx="504.5" cy="226" r="0.9" fill="#fff"/>
 <rect x="495.5" y="228.5" width="9" height="5" fill="#fff" stroke="#2f3a40" stroke-width="1"/>
 <!-- clear print area -->
 <path d="M487.5 254v-5.5a1.5 1.5 0 0 1 1.5-1.5h7l4 4.5v3" fill="#fff" stroke="#2f3a40" stroke-width="1.3"/>
 <rect x="490" y="249.5" width="5" height="5" fill="#eaf6fb"/>
 <path d="M496 247l4.5 4.5h-4.5z" fill="#2f3a40"/>
 <rect x="484.5" y="254.5" width="17" height="9" rx="1.5" fill="#c9c9c9" stroke="#a0a0a0" stroke-width="1"/>
 <rect x="487.5" y="261.5" width="11" height="6" fill="#fff" stroke="#2f3a40" stroke-width="1.2"/>
 <circle cx="501.5" cy="264" r="5.6" fill="#d9294f"/>
 <path d="M499.2 261.7l4.6 4.6M503.8 261.7l-4.6 4.6" stroke="#fff" stroke-width="1.1"/>
 <!-- add print area (disabled) -->
 <path d="M487.5 291v-5.5a1.5 1.5 0 0 1 1.5-1.5h7l4 4.5v3" fill="#fff" stroke="#cfcfcf" stroke-width="1.2"/>
 <path d="M496 284l4.5 4.5h-4.5z" fill="#d6d6d6"/>
 <rect x="484.5" y="291.5" width="17" height="9" rx="1.5" fill="#ececec" stroke="#dedede" stroke-width="1"/>
 <rect x="487.5" y="298.5" width="11" height="6" fill="#fff" stroke="#d2d2d2" stroke-width="1.1"/>
 <circle cx="501.5" cy="301" r="5.6" fill="#cfe6dc"/>
 <path d="M501.5 297.5v7M498 301h7" stroke="#fff" stroke-width="1.2"/>
</svg>

<div class="a" style="left:228px;top:184px;width:245px;height:62px;border:7px solid #fb0000;box-shadow:1px 1px 2px rgba(0,0,0,.25)"></div>
<svg style="left:0;top:0" width="1224" height="1000"><defs><filter id="sh" x="-5%" y="-20%" width="110%" height="140%"><feDropShadow dx="1" dy="1.5" stdDeviation="1" flood-color="#000" flood-opacity="0.3"/></filter></defs><polygon filter="url(#sh)" points="633.6,261.5 742.8,241.2 739.4,267.8 964.7,298.3 962.5,314.9 736.6,286 733.7,311.8" fill="#fd0000"/></svg>
<div class="a" style="left:0px;top:958px;width:1224px;height:42px;background:#ececec;border-top:1px solid #c8c8c8"></div>
<div class="t " style="left:126px;top:969px;font-size:16.4px;color:#333">Monthly Budget Report</div>
<div class="a" style="left:310px;top:958px;width:168px;height:35px;background:#fff;border:1px solid #cfcfcf;box-shadow:0 1px 1px #bbb"></div>
<div class="t bd" style="left:325px;top:970.5px;font-size:15.7px;color:#1d6b40">Monthly Expenses</div>
<svg style="left:0;top:0" width="600" height="1000"><path d="M516 970v12M509.5 976h12.5" stroke="#8a8a8a" stroke-width="2"/></svg>
<svg style="left:0;top:950" width="1224" height="50">
 <path d="M19.5 22v12" stroke="#c4c4c4" stroke-width="1"/><path d="M27 22v12l-6.5-6z" fill="#c4c4c4"/>
 <path d="M51 22v12l-6.5-6z" fill="#c4c4c4"/>
 <path d="M70.5 22v12l6.5-6z" fill="#c4c4c4"/>
 <path d="M94 22v12l6.5-6z" fill="#c4c4c4"/><path d="M101.5 22v12" stroke="#c4c4c4" stroke-width="1"/>
 <circle cx="1127.5" cy="23" r="1.8" fill="#999"/><circle cx="1127.5" cy="29" r="1.8" fill="#999"/><circle cx="1127.5" cy="35" r="1.8" fill="#999"/>
 <path d="M1154.5 24v10l-5.5-5z" fill="#666"/>
 <rect x="1162" y="22" width="59" height="15" fill="#d8d8d8"/>
</svg>
</div>
</body></html>
